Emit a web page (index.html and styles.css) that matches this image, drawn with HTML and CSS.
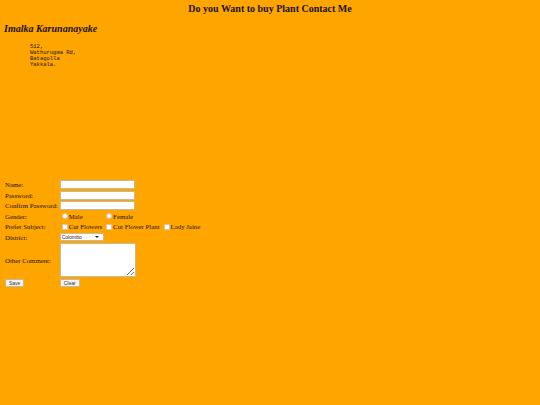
FILE: index.html
```html
<!DOCTYPE html>
<html>
<head>
<meta charset="utf-8">
<link rel="stylesheet" href="styles.css">
</head>
<body>
<h1 class="title">Do you Want to buy Plant Contact Me</h1>
<h2 class="name">Imalka Karunanayake</h2>
<pre class="addr">512,
Wathurugma Rd,
Batagolla
Yakkala.</pre>
<form class="form">
<table class="tbl">
<tr><td class="lbl">Name:</td><td colspan="3"><input class="txt" type="text"></td></tr>
<tr><td class="lbl">Password:</td><td colspan="3"><input class="txt" type="password"></td></tr>
<tr><td class="lbl">Confirm Password:</td><td colspan="3"><input class="txt" type="password"></td></tr>
<tr><td class="lbl">Gender:</td><td><label class="opt"><span class="rad"></span>Male</label></td><td><label class="opt"><span class="rad"></span>Female</label></td><td></td></tr>
<tr><td class="lbl">Prefer Subject:</td><td><label class="opt"><span class="chk"></span>Cut Flowers</label></td><td><label class="opt"><span class="chk"></span>Cut Flower Plant</label></td><td><label class="opt"><span class="chk"></span>Lady Jaine</label></td></tr>
<tr><td class="lbl">District:</td><td colspan="3"><span class="selwrap"><select class="sel"><option>Colombo</option></select><span class="arrow"></span></span></td></tr>
<tr class="tall"><td class="lbl">Other Comment:</td><td colspan="3"><textarea class="area"></textarea></td></tr>
<tr><td class="lbl"><button class="btn" type="button">Save</button></td><td colspan="3"><button class="btn" type="button">Clear</button></td></tr>
</table>
</form>
</body>
</html>
```
FILE: styles.css
```css
html, body {
  margin: 0;
  padding: 0;
  background: #ffa500;
  height: 100%;
}
body {
  font-family: "Liberation Serif", serif;
  color: #1a1200;
}
.title {
  margin: 0;
  padding-top: 3px;
  text-align: center;
  font-size: 10px;
  line-height: 12px;
  font-weight: bold;
}
.name {
  margin: 8px 0 0 4px;
  font-size: 10px;
  line-height: 12px;
  font-style: italic;
  font-weight: bold;
}
.addr {
  margin: 9px 0 0 30px;
  font-family: "Liberation Mono", monospace;
  font-size: 5.5px;
  line-height: 6px;
}
.form {
  margin: 0;
  padding-top: 111px;
}
.tbl {
  border-collapse: separate;
  border-spacing: 2px 1px;
  margin-left: 3px;
  font-size: 6.8px;
}
.tbl td {
  padding: 0;
  height: 9.5px;
  vertical-align: middle;
  white-space: nowrap;
}
.tall td {
  height: 34px;
}
.lbl {
  padding-right: 0 !important;
}
.txt {
  box-sizing: border-box;
  width: 75px;
  height: 9px;
  margin: 0;
  padding: 0;
  border: 1px solid #c9b79a;
  background: #fff;
  display: block;
}
.opt {
  display: inline-flex;
  align-items: center;
  padding-left: 2px;
}
.rad, .chk {
  display: inline-block;
  width: 4px;
  height: 4px;
  margin-right: 1px;
  background: #fff;
  border: 0.5px solid #d8c8a8;
}
.rad {
  border-radius: 50%;
}
.chk {
  border-radius: 1px;
}
.selwrap {
  position: relative;
  display: block;
  width: 44px;
}
.sel {
  appearance: none;
  -webkit-appearance: none;
  box-sizing: border-box;
  width: 44px;
  height: 8px;
  font-size: 5px;
  line-height: 6px;
  padding: 0 0 0 1px;
  margin: 0;
  border: 1px solid #c9b79a;
  border-radius: 1px;
  background: #fff;
  color: #222;
  display: block;
  font-family: "Liberation Sans", sans-serif;
}
.arrow {
  position: absolute;
  right: 5px;
  top: 3px;
  width: 0;
  height: 0;
  border-left: 2px solid transparent;
  border-right: 2px solid transparent;
  border-top: 2px solid #222;
}
.area {
  box-sizing: border-box;
  width: 76px;
  height: 34px;
  margin: 0;
  padding: 0;
  border: 1px solid #c9b79a;
  display: block;
  resize: both;
}
.btn {
  font-size: 5px;
  height: 8px;
  padding: 0 3px;
  margin: 1px 0 0 0;
  line-height: 6px;
  border: 1px solid #c9b79a;
  border-radius: 1px;
  background: #f3f3f3;
  color: #333;
  font-family: "Liberation Sans", sans-serif;
}
```
